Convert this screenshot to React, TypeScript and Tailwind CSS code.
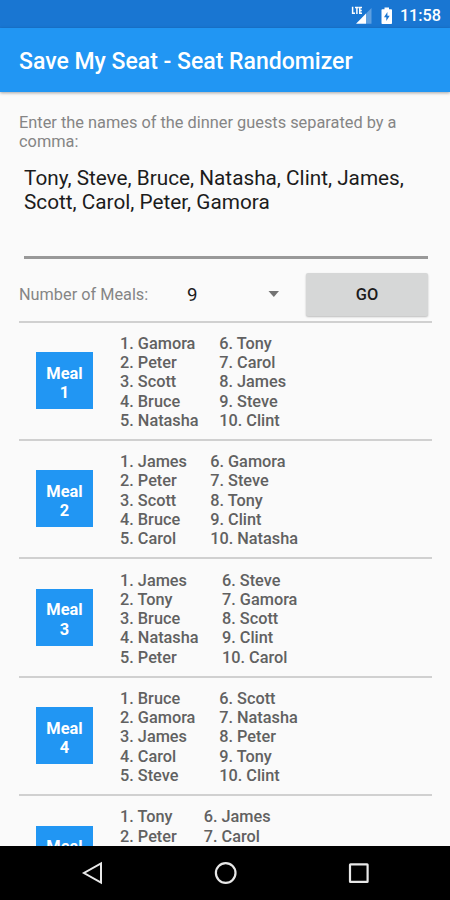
import React, { useState } from "react";

interface Meal {
  left: string[];
  right: string[];
  columnClass: string;
}

const meals: Meal[] = [
  {
    left: ["Gamora", "Peter", "Scott", "Bruce", "Natasha"],
    right: ["Tony", "Carol", "James", "Steve", "Clint"],
    columnClass: "w-[99.2px]",
  },
  {
    left: ["James", "Peter", "Scott", "Bruce", "Carol"],
    right: ["Gamora", "Steve", "Tony", "Clint", "Natasha"],
    columnClass: "w-[90.2px]",
  },
  {
    left: ["James", "Tony", "Bruce", "Natasha", "Peter"],
    right: ["Steve", "Gamora", "Scott", "Clint", "Carol"],
    columnClass: "w-[102px]",
  },
  {
    left: ["Bruce", "Gamora", "James", "Carol", "Steve"],
    right: ["Scott", "Natasha", "Peter", "Tony", "Clint"],
    columnClass: "w-[99.2px]",
  },
  {
    left: ["Tony", "Peter"],
    right: ["James", "Carol"],
    columnClass: "w-[83.7px]",
  },
];

const StatusBar = () => (
  <div className="flex h-7 shrink-0 items-center justify-end bg-[#1976d2] pr-[9px] pt-[3px] text-white">
    <svg width="22" height="20" viewBox="0 0 22 20" className="mr-[9px]">
      <path d="M21.5 2V17.8H16V7.5Z" fill="#5e9fe0" />
      <path d="M16 7.5V17.8H6Z" fill="#fff" />
      <path
        d="M2.6 0.8V7.3H5M5 1.5H8.8M6.9 1.5V8M12 1.5H9.8V7.3H12M9.8 4.4H11.8"
        fill="none"
        stroke="#fff"
        strokeWidth="1.5"
      />
    </svg>
    <svg width="12" height="18" viewBox="0 0 12 18" className="mr-[7px]">
      <path
        d="M3.5 0.5H8V2.2H10.2Q11 2.2 11 3V16.2Q11 17 10.2 17H1.3Q.5 17 .5 16.2V3Q.5 2.2 1.3 2.2H3.5Z"
        fill="#fff"
      />
      <path d="M6.4 5L3 10.3H5.3V14L8.7 8.7H6.4Z" fill="#1976d2" />
    </svg>
    <span className="text-[16.2px] font-medium leading-5">11:58</span>
  </div>
);

const GuestColumn = ({ guests, start }: { guests: string[]; start: number }) => (
  <div>
    {guests.map((guest, i) => (
      <p key={guest} className="whitespace-nowrap">
        {start + i}. {guest}
      </p>
    ))}
  </div>
);

const MealRow = ({ meal, number }: { meal: Meal; number: number }) => (
  <div className="flex h-[118.4px] shrink-0 border-t-2 border-[#d0d0d0] pl-[17px]">
    <div className="mt-[29.4px] flex h-[57px] w-[57px] flex-col items-center justify-center bg-[#2196f3] pt-[5px] text-[16.4px] font-bold leading-[19.3px] text-white">
      <span>Meal</span>
      <span>{number}</span>
    </div>
    <div className="ml-[27px] flex pt-[11.2px] text-[16.3px] font-medium leading-[19.25px] text-[#616161]">
      <div className={meal.columnClass}>
        <GuestColumn guests={meal.left} start={1} />
      </div>
      <GuestColumn guests={meal.right} start={6} />
    </div>
  </div>
);

const NavigationBar = () => (
  <div className="flex h-[54px] shrink-0 items-center justify-between bg-black pl-[81px] pr-[80px]">
    <svg width="22" height="24" viewBox="0 0 22 24" fill="none" stroke="#e8e8e8" strokeWidth="2">
      <path d="M20 2.5V21.5L3 12Z" />
    </svg>
    <svg width="24" height="24" viewBox="0 0 24 24" fill="none" stroke="#e8e8e8" strokeWidth="2.2">
      <circle cx="11.7" cy="12" r="9.8" />
    </svg>
    <svg width="22" height="22" viewBox="0 0 22 22" fill="none" stroke="#e8e8e8" strokeWidth="2.2">
      <rect x="2" y="2.3" width="17.6" height="17.6" rx="0.5" />
    </svg>
  </div>
);

const App = () => {
  const [names, setNames] = useState(
    "Tony, Steve, Bruce, Natasha, Clint, James, Scott, Carol, Peter, Gamora"
  );

  return (
    <div className="flex h-[900px] w-[450px] flex-col overflow-hidden bg-[#fafafa] font-['Roboto',sans-serif]">
      <StatusBar />
      <header className="z-10 flex h-16 shrink-0 items-center bg-[#2196f3] pl-[19px] pt-[5px] shadow-[0_1px_3px_rgba(0,0,0,0.35)]">
        <h1 className="text-[23px] font-medium text-white">
          Save My Seat - Seat Randomizer
        </h1>
      </header>
      <main className="flex min-h-0 flex-1 flex-col overflow-hidden pl-[19px] pr-[18px] pt-[21px]">
        <label
          htmlFor="names"
          className="text-[16.35px] leading-[19.3px] text-[#858585]"
        >
          Enter the names of the dinner guests separated by a comma:
        </label>
        <textarea
          id="names"
          value={names}
          onChange={(e) => setNames(e.target.value)}
          className="ml-[5px] mr-[4px] mt-[14px] h-[93px] shrink-0 resize-none border-b-[3px] border-[#999999] text-[20.75px] leading-[24.5px] text-[#1c1c1c] outline-none"
        />
        <div className="flex h-[62px] shrink-0 items-center pt-[10px]">
          <span className="w-[168px] pt-px text-[16.3px] text-[#858585]">
            Number of Meals:
          </span>
          <span className="w-[81px] text-[18.7px] text-[#1c1c1c]">9</span>
          <svg width="12" height="8" viewBox="0 0 12 8">
            <path d="M0.5 0H11L5.8 6Z" fill="#737373" />
          </svg>
          <button
            type="button"
            className="ml-[26px] h-[43px] w-[122px] rounded-xs bg-[#d6d7d7] pt-px text-[16.4px] font-medium text-[#1c1c1c] shadow-[0_1px_2px_rgba(0,0,0,0.25)]"
          >
            GO
          </button>
        </div>
        {meals.map((meal, i) => (
          <MealRow key={i} meal={meal} number={i + 1} />
        ))}
      </main>
      <NavigationBar />
    </div>
  );
};

export default App;
